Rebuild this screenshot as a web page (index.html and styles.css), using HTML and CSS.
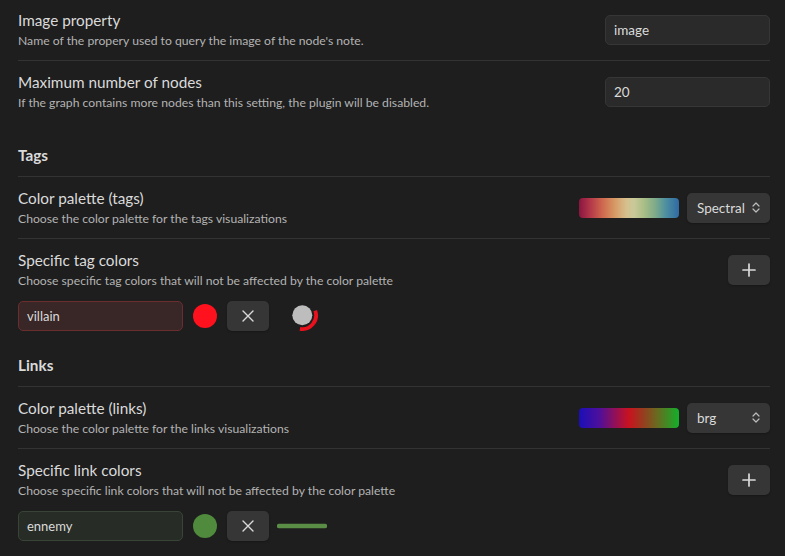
FILE: index.html
```html
<!DOCTYPE html>
<html lang="en">
<head>
<meta charset="utf-8">
<title>Settings</title>
<link rel="stylesheet" href="styles.css">
</head>
<body>
<div class="settings">
  <div class="setting-item first">
    <div class="info">
      <div class="name">Image property</div>
      <div class="desc">Name of the propery used to query the image of the node's note.</div>
    </div>
    <div class="control"><div class="text-input">image</div></div>
  </div>
  <div class="setting-item">
    <div class="info">
      <div class="name">Maximum number of nodes</div>
      <div class="desc">If the graph contains more nodes than this setting, the plugin will be disabled.</div>
    </div>
    <div class="control"><div class="text-input">20</div></div>
  </div>

  <div class="heading">Tags</div>
  <div class="setting-item">
    <div class="info">
      <div class="name">Color palette (tags)</div>
      <div class="desc">Choose the color palette for the tags visualizations</div>
    </div>
    <div class="control">
      <div class="gradient spectral"></div>
      <div class="dropdown"><span>Spectral</span>
        <svg class="chev" width="8" height="11" viewBox="0 0 8 11"><path d="M1 4 L4 1 L7 4 M1 7 L4 10 L7 7" fill="none" stroke="#bdbdbd" stroke-width="1.2" stroke-linecap="round" stroke-linejoin="round"/></svg>
      </div>
    </div>
  </div>
  <div class="setting-item">
    <div class="info">
      <div class="name">Specific tag colors</div>
      <div class="desc">Choose specific tag colors that will not be affected by the color palette</div>
    </div>
    <div class="control">
      <div class="btn"><svg width="14" height="14" viewBox="0 0 14 14"><path d="M7 1 V13 M1 7 H13" stroke="#dadada" stroke-width="1.7" stroke-linecap="round"/></svg></div>
    </div>
  </div>
  <div class="color-row">
    <div class="text-input small villain">villain</div>
    <div class="swatch red"></div>
    <div class="btn"><svg width="14" height="14" viewBox="0 0 14 14"><path d="M2 2 L12 12 M12 2 L2 12" stroke="#dadada" stroke-width="1.4" stroke-linecap="round"/></svg></div>
    <svg class="preview" width="50" height="32" viewBox="0 0 50 32"><circle cx="25.3" cy="15.3" r="10" fill="#bdbdbd"/><path d="M38.2 10.6 A13.7 13.7 0 0 1 22.9 28.8" fill="none" stroke="#e8111d" stroke-width="3.8"/></svg>
  </div>

  <div class="heading">Links</div>
  <div class="setting-item">
    <div class="info">
      <div class="name">Color palette (links)</div>
      <div class="desc">Choose the color palette for the links visualizations</div>
    </div>
    <div class="control">
      <div class="gradient brg"></div>
      <div class="dropdown"><span>brg</span>
        <svg class="chev" width="8" height="11" viewBox="0 0 8 11"><path d="M1 4 L4 1 L7 4 M1 7 L4 10 L7 7" fill="none" stroke="#bdbdbd" stroke-width="1.2" stroke-linecap="round" stroke-linejoin="round"/></svg>
      </div>
    </div>
  </div>
  <div class="setting-item">
    <div class="info">
      <div class="name">Specific link colors</div>
      <div class="desc">Choose specific link colors that will not be affected by the color palette</div>
    </div>
    <div class="control">
      <div class="btn"><svg width="14" height="14" viewBox="0 0 14 14"><path d="M7 1 V13 M1 7 H13" stroke="#dadada" stroke-width="1.7" stroke-linecap="round"/></svg></div>
    </div>
  </div>
  <div class="color-row">
    <div class="text-input small ennemy">ennemy</div>
    <div class="swatch green"></div>
    <div class="btn"><svg width="14" height="14" viewBox="0 0 14 14"><path d="M2 2 L12 12 M12 2 L2 12" stroke="#dadada" stroke-width="1.4" stroke-linecap="round"/></svg></div>
    <svg class="preview" width="50" height="32" viewBox="0 0 50 32"><line x1="2" y1="16" x2="48" y2="16" stroke="#5a8d45" stroke-width="4.5" stroke-linecap="round"/></svg>
  </div>
</div>
</body>
</html>
```

FILE: styles.css
```css
html, body {
  margin: 0;
  padding: 0;
  background: #1e1e1e;
}
body {
  font-family: Lato, "Noto Sans", sans-serif;
  color: #dadada;
  height: 556px;
  overflow: hidden;
}
.settings {
  padding: 0 15px 0 18px;
}
.setting-item {
  display: flex;
  align-items: center;
  justify-content: space-between;
  padding: 11px 0 11px;
  border-top: 1px solid #333;
}
.setting-item.first {
  border-top: none;
  padding-top: 10px;
}
.info {
  flex: 1;
}
.name {
  font-size: 15.3px;
  line-height: 20px;
  color: #dadada;
}
.desc {
  font-size: 12.2px;
  line-height: 17px;
  margin-top: 2px;
  color: #b3b3b3;
}
.control {
  display: flex;
  align-items: center;
  gap: 8px;
}
.text-input {
  box-sizing: border-box;
  width: 165px;
  height: 30px;
  padding: 0 8px;
  display: flex;
  align-items: center;
  font-size: 13.5px;
  color: #dadada;
  background: #2a2a2a;
  border: 1px solid #363636;
  border-radius: 5px;
}
.text-input.small {
  font-size: 13px;
}
.villain {
  background: #392727;
  border-color: #6a2e2e;
}
.ennemy {
  background: #272c27;
  border-color: #384536;
}
.heading {
  font-size: 15.3px;
  font-weight: 700;
  line-height: 20px;
  padding: 23px 0 11px;
  color: #dadada;
}
.gradient {
  width: 100px;
  height: 20px;
  border-radius: 4px;
}
.spectral {
  background: linear-gradient(to right, #8a1540 0%, #b63a4a 12%, #cf6a4e 24%, #d79a66 36%, #d6bf8c 47%, #c9c99a 55%, #a9be86 65%, #7eab8a 76%, #4d8fa0 87%, #2f6aa3 100%);
}
.brg {
  background: linear-gradient(to right, #1a0fb8 0%, #4d0f9c 20%, #9a1050 38%, #c8131f 50%, #9a3a1e 63%, #6a6a20 78%, #12b02a 100%);
}
.dropdown {
  box-sizing: border-box;
  width: 83px;
  height: 30px;
  padding: 0 10px;
  display: flex;
  align-items: center;
  justify-content: space-between;
  background: #363636;
  border-radius: 5px;
  font-size: 13.5px;
  color: #dadada;
  box-shadow: 0 1px 2px rgba(0, 0, 0, 0.25);
}
.btn {
  box-sizing: border-box;
  width: 42px;
  height: 30px;
  display: flex;
  align-items: center;
  justify-content: center;
  background: #363636;
  border-radius: 5px;
  box-shadow: 0 1px 2px rgba(0, 0, 0, 0.25);
}
.color-row {
  display: flex;
  align-items: center;
  gap: 10px;
}
.swatch {
  width: 24px;
  height: 24px;
  border-radius: 50%;
}
.red {
  background: #ff111d;
}
.green {
  background: #4f8a3d;
}
.preview {
  margin-left: -2px;
}
```
